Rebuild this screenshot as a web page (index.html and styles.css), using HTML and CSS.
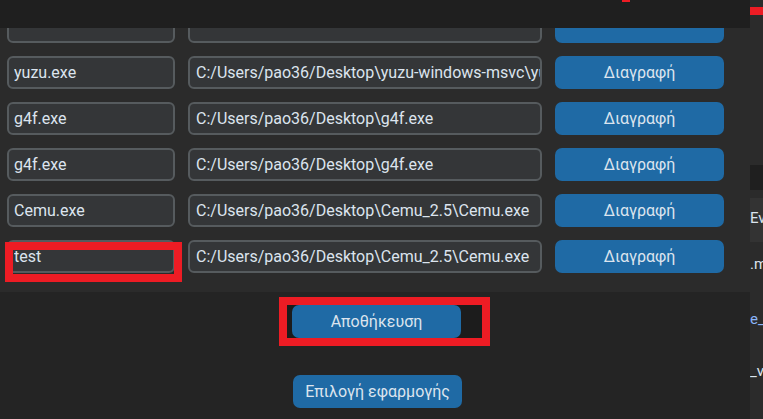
FILE: index.html
```html
<!DOCTYPE html>
<html lang="el">
<head>
    <meta charset="UTF-8">
    <meta name="viewport" content="width=device-width, initial-scale=1.0">
    <title>Εφαρμογές</title>
    <link rel="stylesheet" href="styles.css">
</head>
<body>
    <div class="window">
        <div class="main">
            <div class="topbar"><span class="mark"></span></div>
            <div class="list">
                <div class="rows">
                    <!-- scrolled past, only the bottom edge shows -->
                    <div class="row">
                        <input class="entry name" type="text" value="">
                        <input class="entry path" type="text" value="">
                        <button class="btn"></button>
                    </div>
                    <div class="row">
                        <input class="entry name" type="text" value="yuzu.exe">
                        <input class="entry path" type="text" value="C:/Users/pao36/Desktop\yuzu-windows-msvc\yuzu.exe">
                        <button class="btn">Διαγραφή</button>
                    </div>
                    <div class="row">
                        <input class="entry name" type="text" value="g4f.exe">
                        <input class="entry path" type="text" value="C:/Users/pao36/Desktop\g4f.exe">
                        <button class="btn">Διαγραφή</button>
                    </div>
                    <div class="row">
                        <input class="entry name" type="text" value="g4f.exe">
                        <input class="entry path" type="text" value="C:/Users/pao36/Desktop\g4f.exe">
                        <button class="btn">Διαγραφή</button>
                    </div>
                    <div class="row">
                        <input class="entry name" type="text" value="Cemu.exe">
                        <input class="entry path" type="text" value="C:/Users/pao36/Desktop\Cemu_2.5\Cemu.exe">
                        <button class="btn">Διαγραφή</button>
                    </div>
                    <div class="row">
                        <div class="name-cell">
                            <input class="entry name" type="text" value="test">
                            <span class="highlight"></span>
                        </div>
                        <input class="entry path" type="text" value="C:/Users/pao36/Desktop\Cemu_2.5\Cemu.exe">
                        <button class="btn">Διαγραφή</button>
                    </div>
                </div>
            </div>
            <div class="actions">
                <div class="save-box"><button class="btn">Αποθήκευση</button></div>
                <button class="btn select">Επιλογή εφαρμογής</button>
            </div>
        </div>
        <div class="side">
            <div class="side-mark"></div>
            <div class="side-dark"></div>
            <div class="side-tab">Ev</div>
            <div class="side-text">.m</div>
            <div class="side-text link">e_</div>
            <div class="side-text">_v</div>
        </div>
    </div>
</body>
</html>
```

FILE: styles.css
```css
body {
    margin: 0;
    background: #242424;
    font-family: Roboto, "Noto Sans", sans-serif;
    color: #dce4ee;
}
.window {
    display: flex;
    height: 419px;
    overflow: hidden;
}
.main {
    width: 750px;
    display: flex;
    flex-direction: column;
}
.topbar {
    position: relative;
    height: 28px;
    flex-shrink: 0;
    background: #1f1f1f;
}
.mark {
    position: absolute;
    left: 622px;
    top: 0;
    width: 8px;
    height: 2px;
    background: #ed1c24;
}
.list {
    height: 264px;
    flex-shrink: 0;
    background: #2b2b2b;
    overflow: hidden;
}
.rows {
    display: flex;
    flex-direction: column;
    gap: 13px;
    margin-top: -18px;
    padding-left: 7px;
}
.row {
    display: flex;
    gap: 13px;
    height: 33px;
}
.entry {
    box-sizing: border-box;
    height: 33px;
    margin: 0;
    padding: 0 0 0 5px;
    border: 2px solid #565b5e;
    border-radius: 6px;
    background: #343638;
    color: #dce4ee;
    font-family: Roboto, "Noto Sans", sans-serif;
    font-size: 16px;
    outline: none;
}
.name {
    width: 168px;
}
.path {
    width: 354px;
    padding-left: 6px;
}
.name-cell {
    position: relative;
    display: flex;
}
.highlight {
    position: absolute;
    left: -2px;
    top: 2px;
    width: 177px;
    height: 40px;
    box-sizing: border-box;
    border: 8px solid #ed1c24;
}
.btn {
    width: 169px;
    height: 33px;
    margin: 0;
    padding: 0;
    border: none;
    border-radius: 7px;
    background: #1f6aa5;
    color: #dce4ee;
    font-family: Roboto, "Noto Sans", sans-serif;
    font-size: 16px;
    cursor: pointer;
}
.btn:hover {
    background: #144870;
}
.actions {
    flex: 1;
    display: flex;
    flex-direction: column;
    align-items: flex-start;
    padding-top: 5px;
}
.save-box {
    display: flex;
    margin-left: 279px;
    padding: 0 21px 0 5px;
    border: 8px solid #ed1c24;
    background: #1c1c1c;
}
.select {
    margin-left: 293px;
    margin-top: 29px;
}
.side {
    width: 13px;
    background: #2b2b2b;
    overflow: hidden;
    font-size: 15px;
    white-space: nowrap;
}
.side-mark {
    margin-top: 7px;
    height: 8px;
    background: #ed1c24;
}
.side-dark {
    margin-top: 150px;
    height: 25px;
    background: #1f1f1f;
}
.side-tab {
    margin-top: 8px;
    height: 44px;
    line-height: 40px;
    background: #333333;
}
.side-text {
    height: 20px;
    line-height: 20px;
    margin-top: 12px;
}
.side-text.link {
    margin-top: 35px;
    color: #8ab4f8;
}
.side-text:last-child {
    margin-top: 32px;
}
```
